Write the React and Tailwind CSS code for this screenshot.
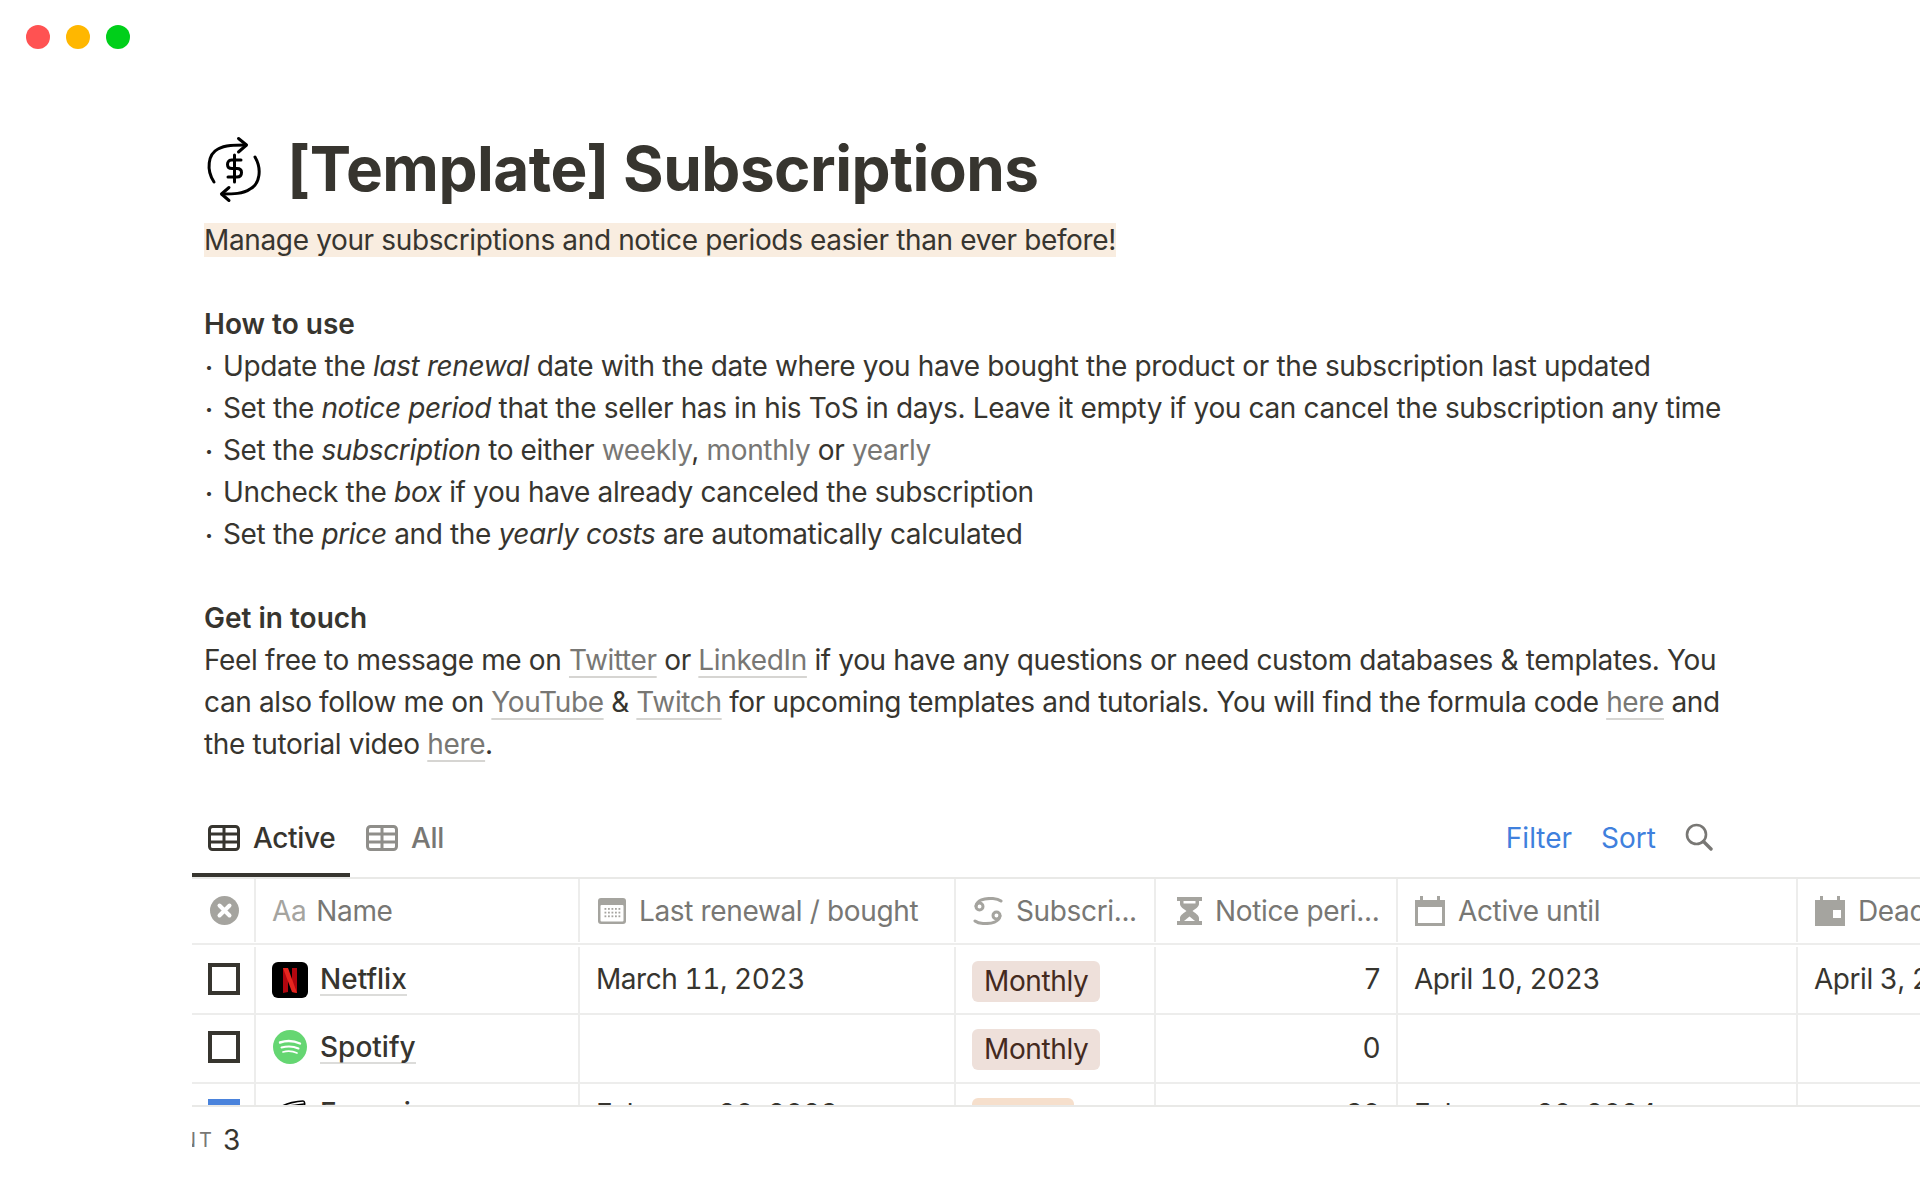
import React from "react";

const Line = ({ children }) => <div className="h-[42px] leading-[42px] whitespace-nowrap">{children}</div>;
const Bullet = ({ children }) => (
  <Line>
    <span className="inline-block w-[19px] text-[24px] font-bold pl-[1px]">·</span>
    {children}
  </Line>
);
const G = ({ children }) => <span className="text-[#787774]">{children}</span>;
const A = ({ children }) => (
  <span className="text-[#787774] underline decoration-2 decoration-[#d6d5d2] underline-offset-[6px] [text-decoration-skip-ink:none]">{children}</span>
);

const TableIcon = ({ color }) => (
  <svg width="32" height="26" viewBox="0 0 32 26" fill="none" stroke={color} strokeWidth="3">
    <rect x="1.5" y="1.5" width="29" height="23" rx="3" />
    <path d="M1.5 9H30.5M1.5 17H30.5M16 1.5V24.5" />
  </svg>
);
const CalDots = () => (
  <svg width="28" height="26" viewBox="0 0 28 26">
    <rect x="0" y="0" width="28" height="26" rx="3" fill="#a5a49f" />
    <rect x="2.5" y="7" width="23" height="16.5" rx="1" fill="#fff" />
    {[0, 1, 2, 3, 4].map((i) =>
      [0, 1, 2].map((j) => <rect key={i + "-" + j} x={6.5 + i * 3.5} y={10 + j * 3.7} width="1.8" height="1.8" fill="#a5a49f" />)
    )}
  </svg>
);
const SelectIcon = () => (
  <svg width="30" height="28" viewBox="0 0 30 28" fill="none" stroke="#a5a49f" strokeWidth="3" strokeLinecap="round">
    <circle cx="6.5" cy="9.5" r="3.5" />
    <circle cx="23.5" cy="18.5" r="3.5" />
    <path d="M3 9C4 3.5 11 1 20 1.5C23 1.7 26 2.5 28 4" />
    <path d="M27 19C26 24.5 19 27 10 26.5C7 26.3 4 25.5 2 24" />
  </svg>
);
const Hourglass = () => (
  <svg width="25" height="28" viewBox="0 0 25 28">
    <path d="M0 0H25V4H22V7C22 10 18 12 15.5 14C18 16 22 18 22 21V24H25V28H0V24H3V21C3 18 7 16 9.5 14C7 12 3 10 3 7V4H0Z" fill="#a5a49f" />
    <path d="M6.5 4H18.5V6.5H6.5Z" fill="#fff" />
    <path d="M12.5 19.5L18 24H7Z" fill="#fff" />
  </svg>
);
const CalEmpty = () => (
  <svg width="30" height="30" viewBox="0 0 30 30">
    <path d="M5 0H8V4H22V0H25V4H30V30H0V4H5Z" fill="#a5a49f" />
    <rect x="3" y="11" width="24" height="16" fill="#fff" />
  </svg>
);
const CalSquare = () => (
  <svg width="30" height="30" viewBox="0 0 30 30">
    <path d="M5 0H8V4H22V0H25V4H30V30H0V4H5Z" fill="#a5a49f" />
    <rect x="18" y="14" width="8" height="8" fill="#fff" />
  </svg>
);
const XCircle = () => (
  <svg width="29" height="29" viewBox="0 0 29 29">
    <circle cx="14.5" cy="14.5" r="14.5" fill="#a5a49f" />
    <path d="M9.5 9.5L19.5 19.5M19.5 9.5L9.5 19.5" stroke="#fff" strokeWidth="4" strokeLinecap="round" />
  </svg>
);
const Search = () => (
  <svg width="28" height="28" viewBox="0 0 28 28" fill="none" stroke="#787774" strokeWidth="2.6" strokeLinecap="round" className="mb-[2px]">
    <circle cx="11.5" cy="11.5" r="9.5" />
    <path d="M18.5 18.5L26 26" strokeWidth="3.4" />
  </svg>
);
const Netflix = () => (
  <svg width="36" height="36" viewBox="0 0 36 36">
    <rect width="36" height="36" rx="6" fill="#000" />
    <path d="M11 6H16V30L11 31Z" fill="#b1060f" />
    <path d="M20 6H25V31L20 30Z" fill="#b1060f" />
    <path d="M11 6H16L25 31L20 30Z" fill="#e5261f" />
  </svg>
);
const Spotify = () => (
  <svg width="34" height="34" viewBox="0 0 34 34" fill="none" className="mb-[3px]">
    <circle cx="17" cy="17" r="17" fill="#65d672" />
    <path d="M7 12.5C13 10.5 21 10.8 27 13.5" stroke="#fff" strokeWidth="2.4" strokeLinecap="round" />
    <path d="M8.5 17.5C14 16 20.5 16.2 25.5 18.5" stroke="#fff" strokeWidth="2" strokeLinecap="round" />
    <path d="M10 22C14.5 20.8 19.5 21 24 23" stroke="#fff" strokeWidth="1.7" strokeLinecap="round" />
  </svg>
);
const Plane = () => (
  <svg width="36" height="36" viewBox="0 0 36 36" fill="none" stroke="#000" strokeWidth="1.6">
    <path d="M7 8C14 3 26 1 31 1C33 1 33 4 32 8C30 16 26 26 20 32" />
    <path d="M7 8C14 6 24 5 32 4" />
  </svg>
);
const Logo = () => (
  <svg width="56" height="67" viewBox="206 134 56 67" fill="none" stroke="#000" strokeWidth="3" strokeLinecap="round" strokeLinejoin="round" className="ml-[2px] shrink-0">
    <path d="M214 180C206 168 208 152 218 147C225 143 235 143 246 143" />
    <path d="M238.5 136.5L246.5 143L238.5 150" />
    <path d="M255 155C262 167 260 182 250 187C243 192 233 192 222 192" />
    <path d="M229 185.5L221.5 192L229 198.5" />
    <path d="M234.5 153V180" />
    <path d="M241 158H231.5C228.5 158 227.5 160.5 227.5 162.5C227.5 165 229 166.5 232 166.5H237C240 166.5 241.5 168 241.5 170.5C241.5 173 240 175 237 175H228" />
  </svg>
);

const cols = ["w-[64px]", "w-[324px]", "w-[376px]", "w-[200px]", "w-[242px]", "w-[400px]", "w-[340px]"];
const Cell = ({ i, className = "", children }) => (
  <div className={`${cols[i]} shrink-0 border-r-2 border-[#ededec] flex items-center overflow-hidden whitespace-nowrap ${className}`}>{children}</div>
);
const Head = ({ i, icon, children, pad = "pl-[17px]" }) => (
  <Cell i={i} className={`${pad} gap-[13px] text-[#787774]`}>
    {icon}
    <span>{children}</span>
  </Cell>
);
const Tag = ({ children, color = "bg-[#eee0da] text-[#442a1e]" }) => (
  <span className={`${color} rounded-[6px] h-[41px] px-[12px] leading-[41px] inline-block`}>{children}</span>
);
const Check = ({ on }) => (
  <span className={`block w-[32px] h-[32px] border-[4px] ${on ? "bg-[#4a83dc] border-[#4a83dc]" : "border-[#37352f]"}`} />
);
const Row = ({ h, name, icon, date, tag, tagColor, n, until, dead, on, className = "", textPad = "pb-[2px]", checkPad = "pb-[2px]", namePad = "" }) => (
  <div className={`flex border-b-2 border-[#ededec] ${h} ${className}`}>
    <Cell i={0} className={`justify-center pl-[2px] ${checkPad}`}><Check on={on} /></Cell>
    <Cell i={1} className="pl-[16px] gap-[12px]">
      <span className="w-[36px] h-[36px] flex items-center justify-center shrink-0">{icon}</span>
      <span className={`font-medium tracking-normal border-b-2 border-[#dcdcda] leading-[30px] ${namePad}`}>{name}</span>
    </Cell>
    <Cell i={2} className={`pl-[16px] tabular-nums tracking-[-0.45px] ${textPad}`}>{date}</Cell>
    <Cell i={3} className="pl-[16px] pt-[2px]"><Tag color={tagColor}>{tag}</Tag></Cell>
    <Cell i={4} className={`justify-end pr-[16px] ${textPad}`}>{n}</Cell>
    <Cell i={5} className={`pl-[16px] tabular-nums tracking-[-0.45px] ${textPad}`}>{until}</Cell>
    <Cell i={6} className={`pl-[16px] tabular-nums tracking-[-0.45px] ${textPad}`}>{dead}</Cell>
  </div>
);

export default function App() {
  return (
    <div className="w-[1920px] h-[1200px] overflow-hidden bg-white text-[#37352f] text-[28px] tracking-[-0.36px] [font-family:Inter,'Liberation_Sans',sans-serif]">
      <div className="flex gap-[16px] pl-[26px] pt-[25px]">
        <span className="w-[24px] h-[24px] rounded-full bg-[#ff5252]" />
        <span className="w-[24px] h-[24px] rounded-full bg-[#ffb700]" />
        <span className="w-[24px] h-[24px] rounded-full bg-[#00cf1a]" />
      </div>

      <div className="pl-[204px] pt-[90px]">
        <div className="flex items-center gap-[25px] h-[60px]">
          <Logo />
          <h1 className="text-[62px] font-bold leading-[60px] tracking-[-0.5px] whitespace-nowrap">[Template] Subscriptions</h1>
        </div>

        <div className="mt-[20px]">
          <Line><span className="bg-[#f9ede0]">Manage your subscriptions and notice periods easier than ever before!</span></Line>
          <Line />
          <Line><b className="font-semibold tracking-normal">How to use</b></Line>
          <Bullet>Update the <i>last renewal</i> date with the date where you have bought the product or the subscription last updated</Bullet>
          <Bullet>Set the <i>notice period</i> that the seller has in his ToS in days. Leave it empty if you can cancel the subscription any time</Bullet>
          <Bullet>Set the <i>subscription</i> to either <G>weekly</G>, <G>monthly</G> or <G>yearly</G></Bullet>
          <Bullet>Uncheck the <i>box</i> if you have already canceled the subscription</Bullet>
          <Bullet>Set the <i>price</i> and the <i>yearly costs</i> are automatically calculated</Bullet>
          <Line />
          <Line><b className="font-semibold tracking-normal">Get in touch</b></Line>
          <Line>Feel free to message me on <A>Twitter</A> or <A>LinkedIn</A> if you have any questions or need custom databases &amp; templates. You</Line>
          <Line>can also follow me on <A>YouTube</A> &amp; <A>Twitch</A> for upcoming templates and tutorials. You will find the formula code <A>here</A> and</Line>
          <Line>the tutorial video <A>here</A>.</Line>
        </div>
      </div>

      <div className="ml-[192px] mt-[34px] w-[1728px]">
        <div className="flex items-start h-[78px] pr-[207px]">
          <div className="w-[158px] h-full border-b-4 border-[#37352f] flex items-center gap-[13px] pl-[16px] pt-[4px] font-medium">
            <TableIcon color="#37352f" />
            <span>Active</span>
          </div>
          <div className="flex items-center h-full gap-[13px] pl-[16px] font-medium text-[#787774]">
            <TableIcon color="#8f8e8a" />
            <span>All</span>
          </div>
          <div className="ml-auto flex items-center h-full gap-[29px] tracking-normal text-[#3f80dd]">
            <span>Filter</span>
            <span>Sort</span>
            <Search />
          </div>
        </div>

        <div className="h-[230px] overflow-hidden border-y-2 border-[#e9e9e7]">
          <div className="flex border-b-2 border-[#ededec] h-[66px] pb-[1px]">
            <Cell i={0} className="justify-center pl-[2px]"><XCircle /></Cell>
            <Cell i={1} className="pl-[16px] gap-[10px] text-[#787774]">
              <span className="text-[#a5a49f]">Aa</span>
              <span>Name</span>
            </Cell>
            <Head i={2} pad="pl-[18px]" icon={<CalDots />}>Last renewal / bought</Head>
            <Head i={3} icon={<SelectIcon />}>Subscri...</Head>
            <Head i={4} pad="pl-[21px]" icon={<Hourglass />}>Notice peri...</Head>
            <Head i={5} icon={<CalEmpty />}>Active until</Head>
            <Head i={6} icon={<CalSquare />}>Deadline</Head>
          </div>
          <Row className="mt-[2px]" h="h-[68px]" icon={<Netflix />} name="Netflix" date="March 11, 2023" tag="Monthly" n="7" until="April 10, 2023" dead="April 3, 2023" />
          <Row h="h-[69px]" icon={<Spotify />} name="Spotify" tag="Monthly" n="0" checkPad="pb-[4px]" namePad="mb-[2px]" />
          <Row h="h-[69px]" on icon={<Plane />} name="Freemium" date="February 20, 2023" tag="Yearly" tagColor="bg-[#f6dfcc] text-[#442a1e] tracking-[-0.8px]" n="30" until="February 20, 2024" textPad="pb-[7px]" checkPad="pb-[5px]" namePad="mb-[7px]" />
        </div>

        <div className="flex items-center h-[64px] pt-[2px]">
          <div className="w-[23px] overflow-hidden flex justify-end">
            <span className="text-[20px] text-[#787774] tracking-[3px] shrink-0">COUNT</span>
          </div>
          <span className="ml-[8px]">3</span>
        </div>
      </div>
    </div>
  );
}
